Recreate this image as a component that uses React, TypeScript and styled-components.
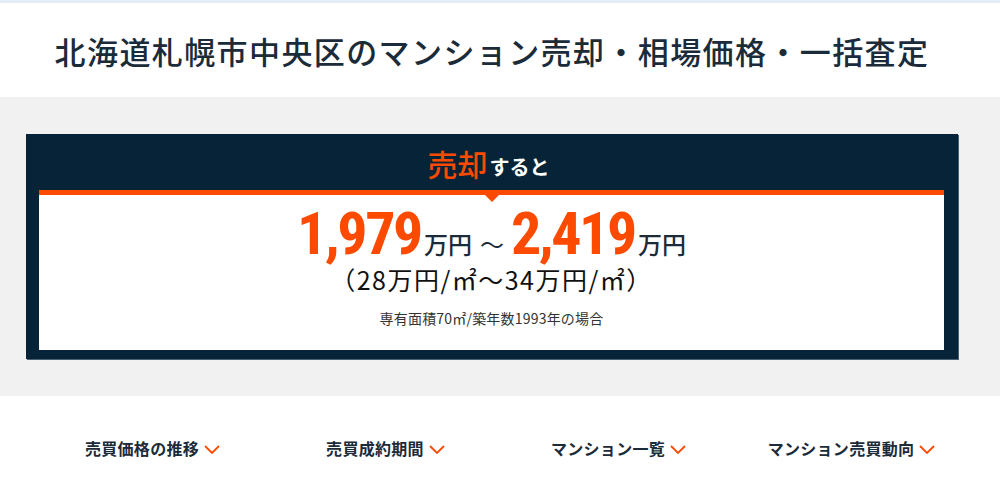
import styled, { createGlobalStyle } from 'styled-components';

const ORANGE = '#fc4a00';
const NAVY = '#062337';
const INK = '#1b2b39';

const GlobalStyle = createGlobalStyle`
  html, body {
    margin: 0;
    padding: 0;
    background: #ffffff;
  }
  body {
    font-family: "Noto Sans CJK JP", "Noto Sans", sans-serif;
    color: ${INK};
  }
`;

const navItems = ['売買価格の推移', '売買成約期間', 'マンション一覧', 'マンション売買動向'];

function Chevron() {
  return (
    <ChevronIcon viewBox="0 0 16 9" width={16} height={9}>
      <path d="M1 1 L8 8 L15 1" fill="none" stroke={ORANGE} strokeWidth={1.8} />
    </ChevronIcon>
  );
}

export default function App() {
  return (
    <>
      <GlobalStyle />
      <TopStrip />
      <Header>
        <Inner>
          <Title>北海道札幌市中央区のマンション売却・相場価格・一括査定</Title>
        </Inner>
      </Header>
      <Band>
        <Inner>
          <Panel>
            <PanelHead>
              <Accent>売却</Accent>
              <HeadRest>すると</HeadRest>
            </PanelHead>
            <PanelBody>
              <PriceRow>
                <Amount>1,979</Amount>
                <Unit>万円</Unit>
                <Tilde>～</Tilde>
                <Amount>2,419</Amount>
                <Unit>万円</Unit>
              </PriceRow>
              <PerArea>（28万円/㎡～34万円/㎡）</PerArea>
              <Note>専有面積70㎡/築年数1993年の場合</Note>
            </PanelBody>
          </Panel>
        </Inner>
      </Band>
      <Inner>
        <Nav>
          {navItems.map(label => (
            <NavItem key={label}>
              {label}
              <Chevron />
            </NavItem>
          ))}
        </Nav>
      </Inner>
    </>
  );
}

const Inner = styled.div`
  width: 984px;
`;

const TopStrip = styled.div`
  height: 3px;
  background: #e4edf6;
`;

const Header = styled.header`
  height: 94px;
  display: flex;
  align-items: center;
`;

const Title = styled.h1`
  margin: 0;
  text-align: center;
  font-size: 31px;
  font-weight: 500;
  letter-spacing: 1.4px;
  color: ${INK};
`;

const Band = styled.section`
  background: #f1f1f1;
  padding: 37px 0 37px;
`;

const Panel = styled.div`
  width: 932px;
  margin: 0 auto;
  box-sizing: border-box;
  background: ${NAVY};
  padding: 0 14px 9px 13px;
  box-shadow: 1px 1px 0 #4a6070;
`;

const PanelHead = styled.div`
  height: 56px;
  display: flex;
  align-items: center;
  justify-content: center;
  padding-top: 2px;
  padding-right: 6px;
  box-sizing: border-box;
`;

const Accent = styled.span`
  color: ${ORANGE};
  font-size: 30px;
  font-weight: 500;
  line-height: 1;
`;

const HeadRest = styled.span`
  color: #ffffff;
  font-size: 20px;
  font-weight: 700;
  line-height: 1;
  margin-top: 8px;
  margin-left: 2px;
`;

const PanelBody = styled.div`
  position: relative;
  background: #ffffff;
  border-top: 5px solid ${ORANGE};
  height: 155px;
  display: flex;
  flex-direction: column;
  align-items: center;

  &::before {
    content: '';
    position: absolute;
    top: 0;
    left: 50%;
    margin-left: -7px;
    border-left: 7px solid transparent;
    border-right: 7px solid transparent;
    border-top: 7px solid ${ORANGE};
  }
`;

const PriceRow = styled.div`
  display: flex;
  align-items: baseline;
  margin-top: 11px;
  height: 56px;
`;

const Amount = styled.span`
  font-family: "Liberation Sans Narrow", "Roboto Condensed", Roboto, sans-serif;
  font-size: 60px;
  font-weight: 700;
  color: ${ORANGE};
  line-height: 56px;
  letter-spacing: -2.4px;
`;

const Unit = styled.span`
  font-size: 24px;
  font-weight: 500;
  line-height: 30px;
  margin-left: 3px;
  color: ${INK};
`;

const Tilde = styled.span`
  font-size: 24px;
  line-height: 30px;
  margin: 0 7px 0 8px;
  color: ${INK};
`;

const PerArea = styled.div`
  font-size: 25px;
  line-height: 34px;
  letter-spacing: 1.5px;
  color: #111;
`;

const Note = styled.div`
  font-size: 14px;
  letter-spacing: 0.2px;
  margin-top: 12px;
  color: #333;
`;

const Nav = styled.nav`
  display: grid;
  grid-template-columns: repeat(4, 233px);
  justify-content: center;
  padding: 40px 0 0 20px;
`;

const NavItem = styled.div`
  display: flex;
  align-items: center;
  justify-content: center;
  gap: 5px;
  font-size: 16px;
  font-weight: 700;
  letter-spacing: 0.3px;
  color: ${INK};
`;

const ChevronIcon = styled.svg`
  margin-top: 3px;
`;
